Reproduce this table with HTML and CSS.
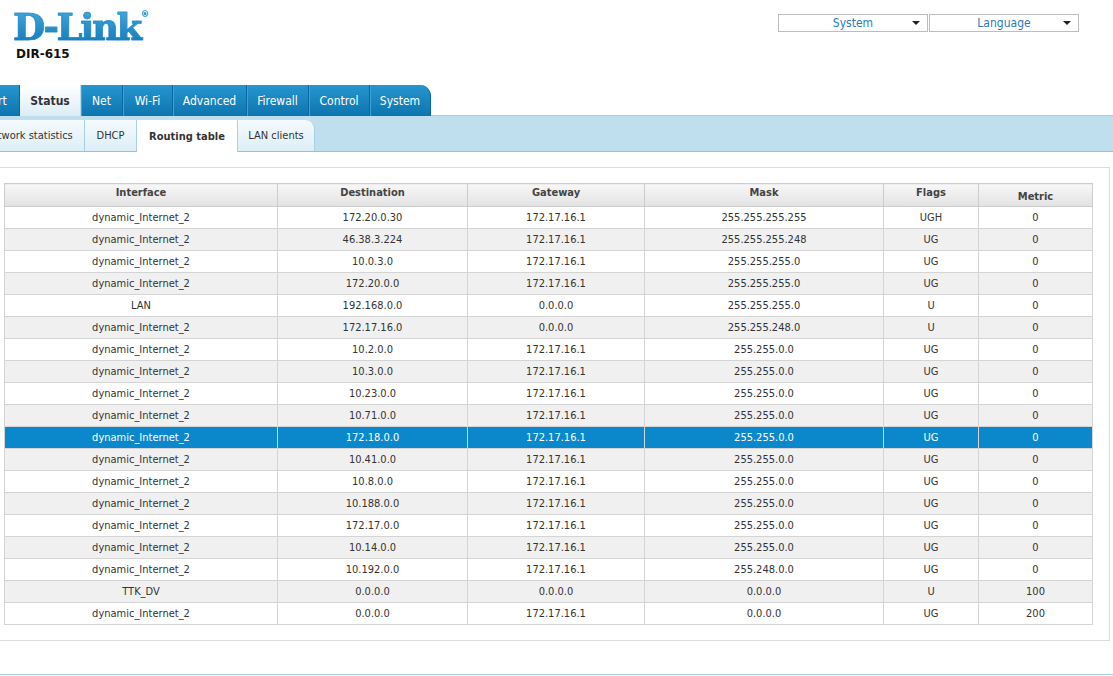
FILE: index.html
```html
<!DOCTYPE html>
<html lang="en">
<head>
<meta charset="utf-8">
<title>D-Link DIR-615 — Routing table</title>
<link rel="stylesheet" href="styles.css">
</head>
<body>
<div class="page">
  <header class="top">
    <div class="brand">
      <div class="logo">D-Link<span class="reg">®</span></div>
      <div class="model">DIR-615</div>
    </div>
    <div class="selects">
      <div class="select"><span class="sel-text">System</span><span class="arrow"></span></div>
      <div class="select"><span class="sel-text">Language</span><span class="arrow"></span></div>
    </div>
  </header>

  <nav class="tabs">
    <span class="tab t-start">Start</span>
    <span class="tab t-status active">Status</span>
    <span class="tab t-net">Net</span>
    <span class="tab t-wifi">Wi-Fi</span>
    <span class="tab t-adv">Advanced</span>
    <span class="tab t-fw">Firewall</span>
    <span class="tab t-ctrl">Control</span>
    <span class="tab t-sys last">System</span>
  </nav>

  <nav class="subbar">
    <div class="subtabs">
      <span class="subtab s-net">Network statistics</span>
      <span class="subtab s-dhcp">DHCP</span>
      <span class="subtab s-route active">Routing table</span>
      <span class="subtab s-lan last">LAN clients</span>
    </div>
  </nav>

  <section class="panel">
    <table class="routes">
      <colgroup>
        <col class="c-if"><col class="c-dst"><col class="c-gw"><col class="c-mask"><col class="c-flags"><col class="c-metric">
      </colgroup>
      <thead>
        <tr><th>Interface</th><th>Destination</th><th>Gateway</th><th>Mask</th><th>Flags</th><th class="metric-h">Metric</th></tr>
      </thead>
      <tbody>
        <tr><td>dynamic_Internet_2</td><td>172.20.0.30</td><td>172.17.16.1</td><td>255.255.255.255</td><td>UGH</td><td>0</td></tr>
        <tr><td>dynamic_Internet_2</td><td>46.38.3.224</td><td>172.17.16.1</td><td>255.255.255.248</td><td>UG</td><td>0</td></tr>
        <tr><td>dynamic_Internet_2</td><td>10.0.3.0</td><td>172.17.16.1</td><td>255.255.255.0</td><td>UG</td><td>0</td></tr>
        <tr><td>dynamic_Internet_2</td><td>172.20.0.0</td><td>172.17.16.1</td><td>255.255.255.0</td><td>UG</td><td>0</td></tr>
        <tr><td>LAN</td><td>192.168.0.0</td><td>0.0.0.0</td><td>255.255.255.0</td><td>U</td><td>0</td></tr>
        <tr><td>dynamic_Internet_2</td><td>172.17.16.0</td><td>0.0.0.0</td><td>255.255.248.0</td><td>U</td><td>0</td></tr>
        <tr><td>dynamic_Internet_2</td><td>10.2.0.0</td><td>172.17.16.1</td><td>255.255.0.0</td><td>UG</td><td>0</td></tr>
        <tr><td>dynamic_Internet_2</td><td>10.3.0.0</td><td>172.17.16.1</td><td>255.255.0.0</td><td>UG</td><td>0</td></tr>
        <tr><td>dynamic_Internet_2</td><td>10.23.0.0</td><td>172.17.16.1</td><td>255.255.0.0</td><td>UG</td><td>0</td></tr>
        <tr><td>dynamic_Internet_2</td><td>10.71.0.0</td><td>172.17.16.1</td><td>255.255.0.0</td><td>UG</td><td>0</td></tr>
        <tr class="selected"><td>dynamic_Internet_2</td><td>172.18.0.0</td><td>172.17.16.1</td><td>255.255.0.0</td><td>UG</td><td>0</td></tr>
        <tr><td>dynamic_Internet_2</td><td>10.41.0.0</td><td>172.17.16.1</td><td>255.255.0.0</td><td>UG</td><td>0</td></tr>
        <tr><td>dynamic_Internet_2</td><td>10.8.0.0</td><td>172.17.16.1</td><td>255.255.0.0</td><td>UG</td><td>0</td></tr>
        <tr><td>dynamic_Internet_2</td><td>10.188.0.0</td><td>172.17.16.1</td><td>255.255.0.0</td><td>UG</td><td>0</td></tr>
        <tr><td>dynamic_Internet_2</td><td>172.17.0.0</td><td>172.17.16.1</td><td>255.255.0.0</td><td>UG</td><td>0</td></tr>
        <tr><td>dynamic_Internet_2</td><td>10.14.0.0</td><td>172.17.16.1</td><td>255.255.0.0</td><td>UG</td><td>0</td></tr>
        <tr><td>dynamic_Internet_2</td><td>10.192.0.0</td><td>172.17.16.1</td><td>255.248.0.0</td><td>UG</td><td>0</td></tr>
        <tr><td>TTK_DV</td><td>0.0.0.0</td><td>0.0.0.0</td><td>0.0.0.0</td><td>U</td><td>100</td></tr>
        <tr><td>dynamic_Internet_2</td><td>0.0.0.0</td><td>172.17.16.1</td><td>0.0.0.0</td><td>UG</td><td>200</td></tr>
      </tbody>
    </table>
  </section>

  <div class="footer-line"></div>
</div>
</body>
</html>
```

FILE: styles.css
```css
html, body {
  margin: 0;
  padding: 0;
  background: #fff;
  overflow: hidden;
}

body {
  font-family: "DejaVu Sans Condensed", "DejaVu Sans", "Liberation Sans", sans-serif;
  font-size: 11px;
  color: #333;
}

.page {
  width: 1113px;
}

/* ---------- header ---------- */
.top {
  display: flex;
  justify-content: space-between;
  align-items: flex-start;
  height: 85px;
}

.brand {
  padding: 8px 0 0 13px;
}

.logo {
  font-family: "DejaVu Serif", "Liberation Serif", serif;
  font-weight: bold;
  font-size: 37px;
  line-height: 38px;
  letter-spacing: -2.3px;
  background: linear-gradient(#45a9dd, #0f78b9);
  -webkit-background-clip: text;
  background-clip: text;
  color: transparent;
  display: inline-block;
  height: 38px;
  -webkit-text-stroke: 0.6px #1a86c4;
}

.reg {
  font-family: "DejaVu Sans", sans-serif;
  font-size: 8px;
  vertical-align: top;
  line-height: 14px;
  letter-spacing: 0;
  color: #2a90cc;
  -webkit-text-stroke: 0;
  margin-left: 1px;
}

.model {
  font-family: "DejaVu Sans", sans-serif;
  font-weight: bold;
  font-size: 12px;
  color: #111;
  margin: 0 0 0 3px;
  line-height: 16px;
}

.selects {
  display: flex;
  gap: 1px;
  margin: 14px 34px 0 0;
}

.select {
  width: 148px;
  height: 16px;
  border: 1px solid #bdbdbd;
  display: flex;
  align-items: center;
  justify-content: center;
  font-size: 12px;
  color: #2b7ab6;
  position: relative;
}

.sel-text {
  line-height: 16px;
}

.arrow {
  position: absolute;
  right: 7px;
  top: 6px;
  width: 0;
  height: 0;
  border-left: 4px solid transparent;
  border-right: 4px solid transparent;
  border-top: 4px solid #222;
}

/* ---------- main tabs ---------- */
.tabs {
  display: flex;
  height: 31px;
  margin-left: -32px;
}

.tab {
  display: flex;
  align-items: center;
  justify-content: center;
  box-sizing: border-box;
  font-size: 12px;
  color: #fff;
  background: linear-gradient(#2596d0, #0e74ae);
  border-right: 1px solid #0a679e;
  box-shadow: inset 1px 0 0 #3aa3d8;
  white-space: nowrap;
}

.t-start { width: 52px; }
.t-status { width: 61px; }
.t-net { width: 42px; }
.t-wifi { width: 50px; }
.t-adv { width: 74px; }
.t-fw { width: 62px; }
.t-ctrl { width: 61px; }
.t-sys { width: 61px; }

.tab.active {
  background: linear-gradient(#ffffff, #dcecf5);
  color: #333;
  font-weight: bold;
  box-shadow: none;
  border-right: 1px solid #bcdcec;
}

.tab.last {
  border-top-right-radius: 11px;
  border-right: 1px solid #0a679e;
}

/* ---------- sub tabs ---------- */
.subbar {
  height: 35px;
  background: #c0dfee;
  border-top: 1px solid #a7cfe4;
  border-bottom: 1px solid #95c1da;
  margin-top: -1px;
}

.subtabs {
  display: flex;
  height: 31px;
  margin: 4px 0 0 -27px;
}

.subtab {
  display: flex;
  align-items: center;
  justify-content: center;
  box-sizing: border-box;
  font-size: 11px;
  color: #333;
  background: linear-gradient(#f5fafd, #ddeef7);
  border-right: 1px solid #a9cfe3;
  height: 31px;
  padding-bottom: 1px;
  white-space: nowrap;
}

.s-net { width: 112px; }
.s-dhcp { width: 52px; }
.s-route { width: 101px; }
.s-lan { width: 77px; }

.subtab.active {
  background: #fff;
  font-weight: bold;
  height: 32px;
  padding: 1px 0 0;
}

.subtab.last {
  border-top-right-radius: 9px;
}

/* ---------- panel ---------- */
.panel {
  margin: 15px 3px 0 -12px;
  border: 1px solid #dddddd;
  padding: 15px 16px 15px 15px;
}

.routes {
  width: 1088px;
  border-collapse: collapse;
  table-layout: fixed;
  font-size: 11px;
}

.c-if { width: 273px; }
.c-dst { width: 190px; }
.c-gw { width: 177px; }
.c-mask { width: 239px; }
.c-flags { width: 95px; }
.c-metric { width: 114px; }

.routes thead tr {
  height: 23px;
}

.routes th {
  padding: 0 0 6px;
  font-weight: bold;
  color: #444;
  background: linear-gradient(#f7f7f7, #e2e2e2);
  border: 1px solid #cccccc;
  text-align: center;
  vertical-align: middle;
}

.routes th.metric-h {
  padding: 2px 0 0;
}

.routes tbody tr {
  height: 22px;
}

.routes td {
  padding: 0;
  text-align: center;
  border: 1px solid #d4d4d4;
  color: #333;
  white-space: nowrap;
}

.routes tbody tr:nth-child(even) td {
  background: #f0f0f0;
}

.routes tbody tr.selected td {
  background: #0a88cb;
  color: #fff;
}

/* ---------- footer ---------- */
.footer-line {
  margin-top: 33px;
  border-top: 1px solid #a9cde0;
  height: 4px;
}
```
